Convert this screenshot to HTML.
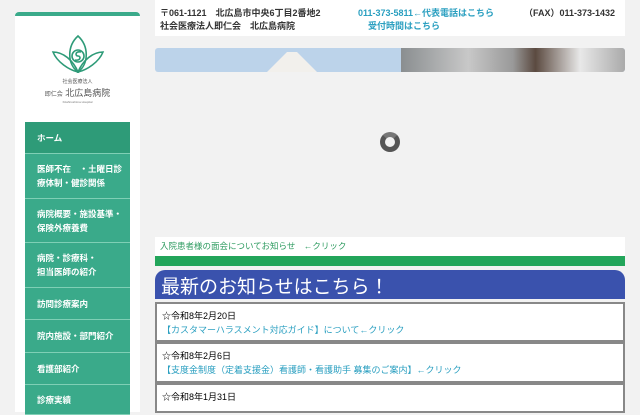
<!DOCTYPE html>
<html><head><meta charset="utf-8"><style>
*{margin:0;padding:0;box-sizing:border-box}
body{width:640px;height:400px;overflow:hidden;background:#f2f2f2;font-family:"Liberation Sans","Noto Sans CJK JP",sans-serif;position:relative}
.side{position:absolute;left:15px;top:12px;width:125px;height:400px;background:#fff;border-top:4px solid #3aaa8a;border-radius:4px 4px 0 0}
.nav{position:absolute;left:25px;top:122px;width:105px}
.nav div{background:#3aaa8a;color:#fff;font-size:8.5px;font-weight:bold;padding:0 4px 0 12px;border-bottom:1px solid #7fcfb5;display:flex;align-items:center;line-height:14px}
.hd{position:absolute;left:155px;top:0;width:470px;height:36px;background:#fff;font-size:9px;font-weight:bold;color:#333}
.hd span{position:absolute}
.bl{color:#2a9fc0}
.ban{position:absolute;left:155px;top:48px;width:470px;height:24px;border-radius:3px;overflow:hidden;background:#bcd3ea}
.box{position:absolute;left:155px;width:470px;background:#fff;border:2px solid #888;font-size:9px;padding:5px 5px;line-height:14px}
</style></head><body>
<div class="side">
<svg style="position:absolute;left:36px;top:18px" width="54" height="42" viewBox="0 0 54 42" fill="none" stroke="#2e9b78" stroke-width="1.6"><path d="M27 2 C16 12 16 30 27 38 C38 30 38 12 27 2Z"/><path d="M27 38 C18 36 6 28 2 18 C12 18 22 26 27 38Z"/><path d="M27 38 C36 36 48 28 52 18 C42 18 32 26 27 38Z"/><circle cx="27" cy="22" r="6"/><path d="M30 18 C24 17 24 22 27 22 C30 22 30 27 24 26"/></svg>
<div style="position:absolute;left:0;width:125px;top:62px;text-align:center;font-size:5px;color:#555">社会医療法人</div>
<div style="position:absolute;left:0;width:125px;top:70px;text-align:center;font-size:9px;color:#555"><span style="font-size:6px">即仁会</span> 北広島病院</div>
<div style="position:absolute;left:0;width:125px;top:84px;text-align:center;font-size:3px;color:#777">Kitahiroshima Hospital</div>
</div>
<div class="nav">
<div style="height:32px;background:#2e9b78">ホーム</div>
<div style="height:45px">医師不在　・土曜日診<br>療体制・健診関係</div>
<div style="height:44px">病院概要・施設基準・<br>保険外療養費</div>
<div style="height:45px">病院・診療科・<br>担当医師の紹介</div>
<div style="height:32px">訪問診療案内</div>
<div style="height:33px">院内施設・部門紹介</div>
<div style="height:32px">看護部紹介</div>
<div style="height:30px">診療実績</div>
</div>
<div class="hd">
<span style="left:5px;top:6px">〒061-1121　北広島市中央6丁目2番地2</span>
<span style="left:5px;top:19px">社会医療法人即仁会　北広島病院</span>
<span class="bl" style="left:203px;top:6px">011-373-5811←代表電話はこちら</span>
<span class="bl" style="left:213px;top:19px">受付時間はこちら</span>
<span style="left:369px;top:6px">（FAX）011-373-1432</span>
</div>
<div class="ban"><div style="position:absolute;left:246px;top:0;width:224px;height:24px;background:linear-gradient(90deg,#8a8e90,#c8c8c8 30%,#999 50%,#5b4a40 60%,#e8e8e8 80%,#aaa)"></div><div style="position:absolute;left:112px;top:4px;width:50px;height:20px;background:#f2f0ec;clip-path:polygon(40% 0,60% 0,100% 100%,0 100%)"></div></div>
<div style="position:absolute;left:380px;top:132px;width:20px;height:20px;border-radius:50%;border:5px solid #555;border-top-color:#777"></div>
<div style="position:absolute;left:155px;top:237px;width:470px;height:19px;background:#fff;color:#2e9b60;font-size:8.5px;padding:3px 5px">入院患者様の面会についてお知らせ　←クリック</div>
<div style="position:absolute;left:155px;top:256px;width:470px;height:10px;background:#22a55a"></div>
<div style="position:absolute;left:155px;top:270px;width:470px;height:29px;background:#3a52ad;border-radius:10px 10px 0 0;color:#fff;font-size:19px;padding:2px 6px">最新のお知らせはこちら！</div>
<div class="box" style="top:302px;height:40px">☆令和8年2月20日<br><span class="bl">【カスタマーハラスメント対応ガイド】について←クリック</span></div>
<div class="box" style="top:342px;height:41px">☆令和8年2月6日<br><span class="bl">【支度金制度（定着支援金）看護師・看護助手 募集のご案内】←クリック</span></div>
<div class="box" style="top:383px;height:30px">☆令和8年1月31日</div>
</body></html>
